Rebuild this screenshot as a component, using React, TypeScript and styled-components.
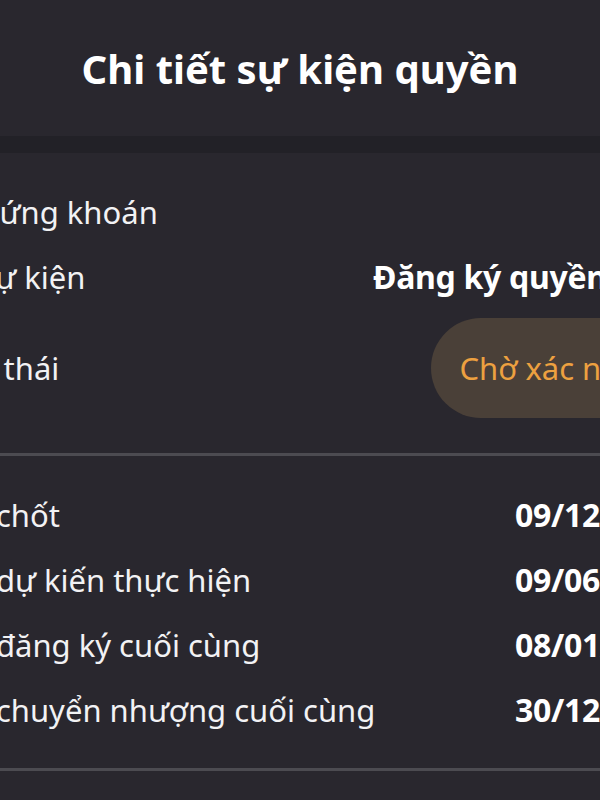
import React from "react";
import styled, { createGlobalStyle } from "styled-components";

const GlobalStyle = createGlobalStyle`
  html, body {
    margin: 0;
    padding: 0;
    background: #29272e;
    overflow: hidden;
  }
  body {
    font-family: "Noto Sans", "Liberation Sans", sans-serif;
    color: #f4f4f6;
  }
`;

const Viewport = styled.div`
  width: 600px;
  height: 800px;
  overflow: hidden;
`;

const Page = styled.div`
  width: 800px;
  margin-left: -100px;
  background: #29272e;
`;

const Header = styled.header`
  height: 136px;
  display: flex;
  align-items: center;
  justify-content: center;
  background: #29272e;
`;

const Title = styled.h1`
  margin: 0;
  font-size: 40px;
  font-weight: 700;
  color: #ffffff;
  letter-spacing: 0;
`;

const Strip = styled.div`
  height: 17px;
  background: #222127;
`;

const Section = styled.section`
  padding: 26px 15px 26px 12px;
  display: flex;
  flex-direction: column;
`;

const Divider = styled.div`
  height: 3px;
  background: #4c4b51;
`;

const Row = styled.div<{ $tall?: boolean }>`
  display: flex;
  align-items: center;
  justify-content: space-between;
  height: ${(p) => (p.$tall ? "118px" : "65px")};
`;

const Label = styled.span`
  font-size: 31px;
  font-weight: 400;
  color: #f2f2f4;
  white-space: nowrap;
`;

const Value = styled.span`
  font-size: 32px;
  font-weight: 700;
  color: #ffffff;
  white-space: nowrap;
  letter-spacing: -0.3px;
`;

const Pill = styled.span`
  display: inline-flex;
  align-items: center;
  height: 100px;
  padding: 0 28px;
  border-radius: 50px;
  background: #4a4038;
  color: #eda140;
  font-size: 31px;
  white-space: nowrap;
`;

const generalRows = [
  { label: "Mã chứng khoán", value: "" },
  { label: "Loại sự kiện", value: "Đăng ký quyền mua" },
];

const dateRows = [
  { label: "Ngày chốt", value: "09/12/2024" },
  { label: "Ngày dự kiến thực hiện", value: "09/06/2025" },
  { label: "Ngày đăng ký cuối cùng", value: "08/01/2025" },
  { label: "Ngày chuyển nhượng cuối cùng", value: "30/12/2024" },
];

export default function App() {
  return (
    <>
      <GlobalStyle />
      <Viewport>
        <Page>
          <Header>
            <Title>Chi tiết sự kiện quyền</Title>
          </Header>
          <Strip />
          <Section>
            {generalRows.map((r) => (
              <Row key={r.label}>
                <Label>{r.label}</Label>
                <Value>{r.value}</Value>
              </Row>
            ))}
            <Row $tall>
              <Label>Trạng thái</Label>
              <Pill>Chờ xác nhận</Pill>
            </Row>
          </Section>
          <Divider />
          <Section>
            {dateRows.map((r) => (
              <Row key={r.label}>
                <Label>{r.label}</Label>
                <Value>{r.value}</Value>
              </Row>
            ))}
          </Section>
          <Divider />
        </Page>
      </Viewport>
    </>
  );
}
